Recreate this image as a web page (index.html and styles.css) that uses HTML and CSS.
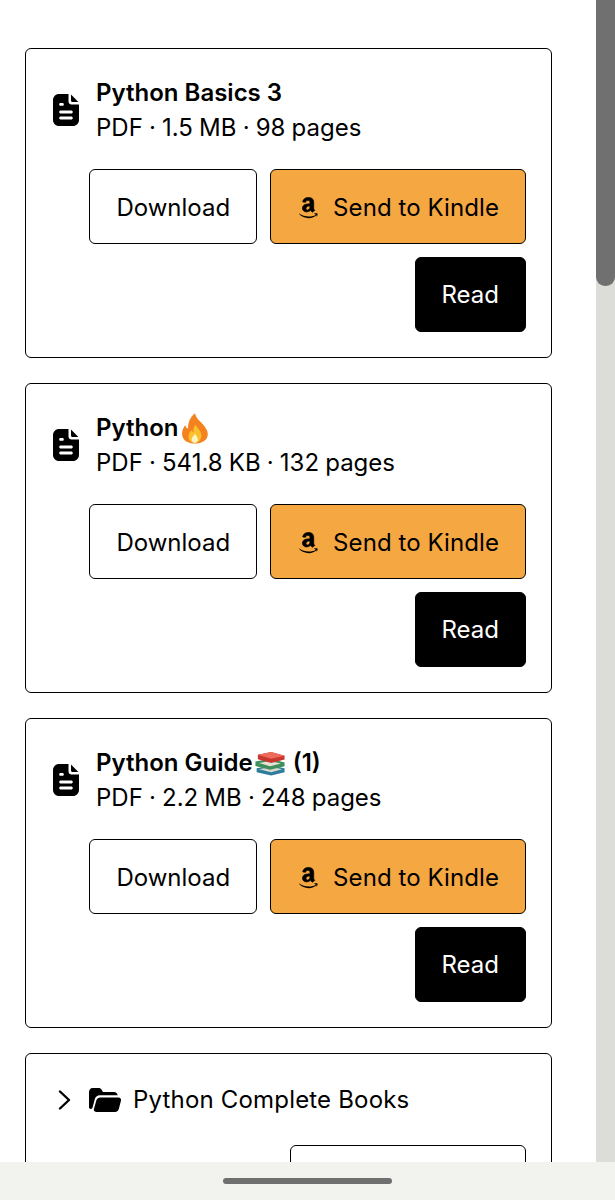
FILE: index.html
```html
<!DOCTYPE html>
<html lang="en">
<head>
    <meta charset="UTF-8">
    <meta name="viewport" content="width=device-width, initial-scale=1.0">
    <title>Python Books</title>
    <link rel="stylesheet" href="styles.css">
</head>
<body>
    <svg class="defs" width="0" height="0" aria-hidden="true">
        <symbol id="fileIcon" viewBox="0 0 26 32">
            <path fill-rule="evenodd" d="M6 0H15.500V7.500C15.500 9.400 17 10.500 18.500 10.500H26V26C26 29.300 23.300 32 20 32H6C2.700 32 0 29.300 0 26V6C0 2.700 2.700 0 6 0ZM18 0.600L25.400 8H19.500C18.700 8 18 7.300 18 6.500ZM7.500 9C6.700 9 6.200 9.600 6.200 10.400S6.700 11.800 7.500 11.800H9.500C10.300 11.800 10.800 11.200 10.800 10.400S10.300 9 9.500 9ZM7.800 16.400C6.800 16.400 6.200 17 6.200 17.900S6.800 19.400 7.800 19.400H18.200C19.200 19.400 19.800 18.800 19.800 17.900S19.200 16.400 18.200 16.400ZM7.800 22.600C6.800 22.600 6.200 23.200 6.200 24.100S6.800 25.600 7.800 25.600H18.200C19.200 25.600 19.800 25 19.800 24.100S19.200 22.600 18.200 22.600Z"/>
        </symbol>
        <symbol id="amazonIcon" viewBox="0 0 22 26">
            <path stroke="#000" stroke-width="0.700" d="M13.600 15.200C13 15.800 12.400 16.300 11.400 16.600 9.400 17.200 7.400 16.900 6.300 15.600 5.200 14.300 5.200 12.100 6.300 10.800 7.500 9.300 9.800 8.900 13 8.800V8.100C13 7 12.900 5.300 10.900 5.300 9.500 5.300 8.800 6.200 8.600 7.200L5.700 6.900C6.200 3.600 9 2.500 11.500 2.500 14.800 2.500 16.700 4 16.700 7.400V13.300C16.700 14.200 17.100 14.600 17.800 15.400L15.300 17.200C14.600 16.700 14.100 16.100 13.600 15.200ZM13 11C11 11 9 11.600 9 13.300 9 14.500 9.700 15 10.500 15 12.500 15 13 13.200 13 11Z"/>
            <path d="M2.300 18.400C6.700 22 15 22.500 19.300 19.400L19.900 20C15.600 24.500 6.400 24.200 2 18.800Z"/>
            <path d="M17.300 18.300C18.300 18 20 18.100 20.500 18.500 20.800 19.300 20.300 21 19.600 21.800L19.500 20.200 17.300 18.700Z"/>
        </symbol>
        <symbol id="folderIcon" viewBox="0 0 32 24">
            <path d="M0 4C0 1.800 1.500 0 3.500 0H9.500C10.700 0 11.500 .5 12.300 1.300L14 4H25C27 4 28.500 5.300 28.700 7.200H11C8.300 7.200 6.800 8.500 6 10.500L3.500 19.800C3 21.500 0 21.500 0 19Z"/>
            <path d="M11.500 9.500H29.500C31.200 9.500 32.300 10.800 32 12.500L29.800 21C29.300 23 27.800 24 26 24H7.500C5.500 24 4.400 22.700 5 20.800L7.300 12.500C7.900 10.500 9.500 9.500 11.500 9.500Z"/>
        </symbol>
    </svg>

    <div class="screen">
        <main class="list">
            <section class="card">
                <div class="file-info">
                    <svg class="file-icon"><use href="#fileIcon"/></svg>
                    <div>
                        <h2 class="file-name">Python Basics 3</h2>
                        <p class="file-meta">PDF · 1.5 MB · 98 pages</p>
                    </div>
                </div>
                <div class="actions">
                    <button class="btn">Download</button>
                    <button class="btn btn-kindle"><svg class="amazon-icon"><use href="#amazonIcon"/></svg>Send to Kindle</button>
                    <button class="btn btn-read">Read</button>
                </div>
            </section>

            <section class="card">
                <div class="file-info">
                    <svg class="file-icon"><use href="#fileIcon"/></svg>
                    <div>
                        <h2 class="file-name">Python<svg class="emoji" viewBox="0 0 28 28" role="img" aria-label="fire">
                            <path fill="#f4831f" d="M14 1C15 6 19 8 22 12 25 16 26 19 24.500 22.500 22.800 26 18.500 27.500 14 27.500S4.800 26 3.300 22C2 18.500 3 14.500 5.500 11.500 6 13 6.800 14 8 14.500 7.500 9.500 10 4 14 1Z"/>
                            <path fill="#fbc02d" d="M14.500 11C15.500 14 19 16 19.500 20 20 24 17 27 14 27 10.500 27 7.800 24.500 8.300 20.800 8.600 18.500 10 17 11 16 11.300 17 11.800 17.500 12.500 18 12.300 15.500 13 13 14.500 11Z"/>
                            <path fill="#fff3c4" d="M14 19C15 21 16.500 22 16.500 24 16.500 26 15.200 27 14 27S11 26 11 24C11 22 13 21 14 19Z"/>
                        </svg></h2>
                        <p class="file-meta">PDF · 541.8 KB · 132 pages</p>
                    </div>
                </div>
                <div class="actions">
                    <button class="btn">Download</button>
                    <button class="btn btn-kindle"><svg class="amazon-icon"><use href="#amazonIcon"/></svg>Send to Kindle</button>
                    <button class="btn btn-read">Read</button>
                </div>
            </section>

            <section class="card">
                <div class="file-info">
                    <svg class="file-icon"><use href="#fileIcon"/></svg>
                    <div>
                        <h2 class="file-name">Python Guide<svg class="emoji emoji-books" viewBox="0 0 28 28" preserveAspectRatio="none" role="img" aria-label="books">
                            <path fill="#2f7d9c" d="M3 20L15 17 26 20V24L15 27.500 3 24Z"/>
                            <path fill="#d9d9d0" d="M5 21L15 18.500 24 21 15 24Z"/>
                            <path fill="#3f8f5a" d="M2 13L14 10 26 14V18L14 21.500 2 17.500Z"/>
                            <path fill="#e3e3d8" d="M5 14.500L14 12.500 23 15 14 18Z"/>
                            <path fill="#c8372d" d="M4 6L15 3 26 7V11L15 14.500 4 10.500Z"/>
                            <path fill="#ee6a5c" d="M4 6L15 3 26 7 15 10Z"/>
                        </svg> (1)</h2>
                        <p class="file-meta">PDF · 2.2 MB · 248 pages</p>
                    </div>
                </div>
                <div class="actions">
                    <button class="btn">Download</button>
                    <button class="btn btn-kindle"><svg class="amazon-icon"><use href="#amazonIcon"/></svg>Send to Kindle</button>
                    <button class="btn btn-read">Read</button>
                </div>
            </section>

            <section class="card">
                <div class="folder-row">
                    <svg class="chevron" viewBox="0 0 13 20"><path d="M2 1.500L11 10 2 18.500" fill="none" stroke="#000" stroke-width="2.400" stroke-linecap="round" stroke-linejoin="round"/></svg>
                    <svg class="folder-icon"><use href="#folderIcon"/></svg>
                    <span class="folder-name">Python Complete Books</span>
                </div>
                <div class="actions">
                    <button class="btn btn-folder">Download folder</button>
                </div>
            </section>
        </main>

        <div class="scrollbar">
            <div class="scroll-thumb"></div>
        </div>

        <!-- Phone nav bar over the page -->
        <div class="nav-bar">
            <div class="nav-handle"></div>
        </div>
    </div>
</body>
</html>
```

FILE: styles.css
```css
body {
    margin: 0;
    background: #fff;
    color: #000;
    font-family: Inter, "Liberation Sans", sans-serif;
}

.defs {
    display: block;
    height: 0;
}

.screen {
    position: relative;
    display: flex;
    height: 1200px;
    overflow: hidden;
}

/* Card list */
.list {
    flex: 1;
    display: flex;
    flex-direction: column;
    gap: 25px;
    padding: 48px 44px 0 25px;
    min-width: 0;
}

.card {
    flex: none;
    padding: 26px 25px 25px 26px;
    border: 1px solid #000;
    border-radius: 6px;
}

.file-info {
    display: flex;
    align-items: center;
    gap: 17px;
}

.file-icon {
    flex: none;
    width: 26px;
    height: 32px;
    margin-left: 1px;
}

.file-name,
.file-meta {
    margin: 0;
    font-size: 24px;
    line-height: 35px;
    white-space: nowrap;
}

.file-name {
    font-weight: 600;
}

.file-meta {
    font-weight: 400;
    word-spacing: -0.6px;
}

.emoji {
    width: 32px;
    height: 32px;
    margin: -4px 0;
    vertical-align: -4px;
}

.emoji-books {
    width: 34px;
    height: 27px;
    margin: -2px 0;
    vertical-align: -3px;
}

/* Buttons */
.actions {
    display: flex;
    flex-wrap: wrap;
    justify-content: flex-end;
    gap: 13px;
    margin-top: 24px;
}

.btn {
    display: flex;
    align-items: center;
    justify-content: center;
    height: 75px;
    padding: 2px 26px 0;
    background: #fff;
    color: #000;
    border: 1px solid #000;
    border-radius: 6px;
    font-family: inherit;
    font-size: 24px;
}

.btn-kindle {
    background: #f5a742;
    letter-spacing: 0.08px;
}

.btn-read {
    background: #000;
    color: #fff;
    padding-top: 0;
}

.btn-folder {
    width: 236px;
    padding: 0;
    margin-top: 1px;
}

.amazon-icon {
    width: 22px;
    height: 26px;
    margin-right: 14px;
}

/* Folder row */
.folder-row {
    display: flex;
    align-items: center;
    height: 40px;
}

.chevron {
    width: 13px;
    height: 20px;
    margin-left: 6px;
}

.folder-icon {
    width: 32px;
    height: 24px;
    margin-left: 18px;
}

.folder-name {
    margin-left: 12px;
    margin-bottom: 1px;
    font-size: 24px;
    letter-spacing: 0.18px;
}

/* Fake scrollbar */
.scrollbar {
    flex: none;
    width: 19px;
    background: #dcdcd8;
}

.scroll-thumb {
    height: 286px;
    background: #707070;
    border-radius: 0 0 9px 9px;
}

/* Bottom nav */
.nav-bar {
    position: absolute;
    left: 0;
    right: 0;
    bottom: 0;
    height: 38px;
    display: flex;
    justify-content: center;
    background: #f2f2ee;
}

.nav-handle {
    width: 169px;
    height: 6px;
    margin-top: 16px;
    background: #6f6f6f;
    border-radius: 3px;
}
```
